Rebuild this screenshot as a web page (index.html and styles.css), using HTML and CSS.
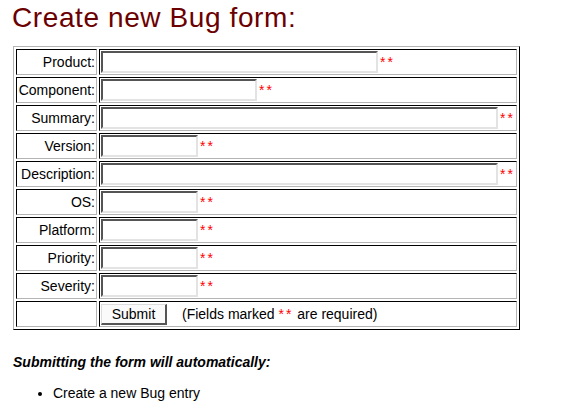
FILE: index.html
```html
<!DOCTYPE html>
<html>
<head>
<meta charset="utf-8">
<title>Create new Bug</title>
<link rel="stylesheet" href="styles.css">
</head>
<body>
<h1 class="title">Create new Bug form:</h1>
<form class="bug-form">
<table class="form-table">
<tr><td class="lbl">Product:</td><td class="fld"><input class="inp w-product" type="text"><span class="req">**</span></td></tr>
<tr><td class="lbl">Component:</td><td class="fld"><input class="inp w-component" type="text"><span class="req">**</span></td></tr>
<tr><td class="lbl">Summary:</td><td class="fld"><input class="inp w-long" type="text"><span class="req">**</span></td></tr>
<tr><td class="lbl">Version:</td><td class="fld"><input class="inp w-short" type="text"><span class="req">**</span></td></tr>
<tr><td class="lbl">Description:</td><td class="fld"><input class="inp w-long" type="text"><span class="req">**</span></td></tr>
<tr><td class="lbl">OS:</td><td class="fld"><input class="inp w-short" type="text"><span class="req">**</span></td></tr>
<tr><td class="lbl">Platform:</td><td class="fld"><input class="inp w-short" type="text"><span class="req">**</span></td></tr>
<tr><td class="lbl">Priority:</td><td class="fld"><input class="inp w-short" type="text"><span class="req">**</span></td></tr>
<tr><td class="lbl">Severity:</td><td class="fld"><input class="inp w-short" type="text"><span class="req">**</span></td></tr>
<tr><td class="lbl"></td><td class="fld"><button class="submit" type="button">Submit</button><span class="note">(Fields marked <span class="req-note">**</span> are required)</span></td></tr>
</table>
</form>
<p class="auto-head">Submitting the form will automatically:</p>
<ul class="auto-list">
<li>Create a new Bug entry</li>
</ul>
</body>
</html>
```

FILE: styles.css
```css
html, body {
  margin: 0;
  padding: 0;
  background: #ffffff;
}
body {
  padding: 2px 0 0 13px;
  font-family: "Liberation Sans", Arial, sans-serif;
  font-size: 14px;
  color: #000000;
}
.title {
  margin: 0 0 12px -1px;
  font-size: 28px;
  line-height: 32px;
  font-weight: normal;
  color: #6b0000;
  letter-spacing: 0.6px;
}
.bug-form {
  margin: 0;
}
.form-table {
  border-collapse: separate;
  border-spacing: 2px;
  border-style: solid;
  border-width: 1px;
  border-color: #b4b4b4 #000000 #000000 #b4b4b4;
}
.form-table td {
  border-style: solid;
  border-width: 1px;
  border-color: #000000 #b4b4b4 #b4b4b4 #000000;
  padding: 1px;
  height: 22px;
  line-height: 16px;
  vertical-align: middle;
  white-space: nowrap;
}
.lbl {
  width: 77px;
  text-align: right;
}
.fld {
  width: 411px;
  font-size: 0;
}
.inp {
  box-sizing: border-box;
  height: 22px;
  margin: 0;
  padding: 0 2px;
  border-style: solid;
  border-width: 2px;
  border-color: #555555 #e3e3e3 #e3e3e3 #555555;
  background: #ffffff;
  vertical-align: middle;
  font-family: "Liberation Sans", Arial, sans-serif;
  font-size: 14px;
}
.w-product { width: 277px; }
.w-component { width: 156px; }
.w-long { width: 397px; }
.w-short { width: 97px; }
.req {
  display: inline-block;
  vertical-align: middle;
  margin-left: 2px;
  color: #ff0000;
  font-size: 14px;
  letter-spacing: 2px;
  line-height: 14px;
}
.submit {
  box-sizing: border-box;
  width: 66px;
  height: 21px;
  margin: 0;
  padding: 0;
  border-style: solid;
  border-width: 1px 2px 2px 1px;
  border-color: #dcdcdc #555555 #555555 #dcdcdc;
  background: #fafafa;
  font-family: "Liberation Sans", Arial, sans-serif;
  font-size: 14px;
  color: #000000;
  vertical-align: middle;
}
.note {
  display: inline-block;
  margin-left: 15px;
  font-size: 14px;
  vertical-align: middle;
}
.req-note {
  color: #ff0000;
  letter-spacing: 2px;
}
.auto-head {
  margin: 24px 0 0 0;
  font-weight: bold;
  font-style: italic;
  line-height: 16px;
}
.auto-list {
  margin: 15px 0 0 0;
  padding-left: 40px;
  line-height: 16px;
}
```
